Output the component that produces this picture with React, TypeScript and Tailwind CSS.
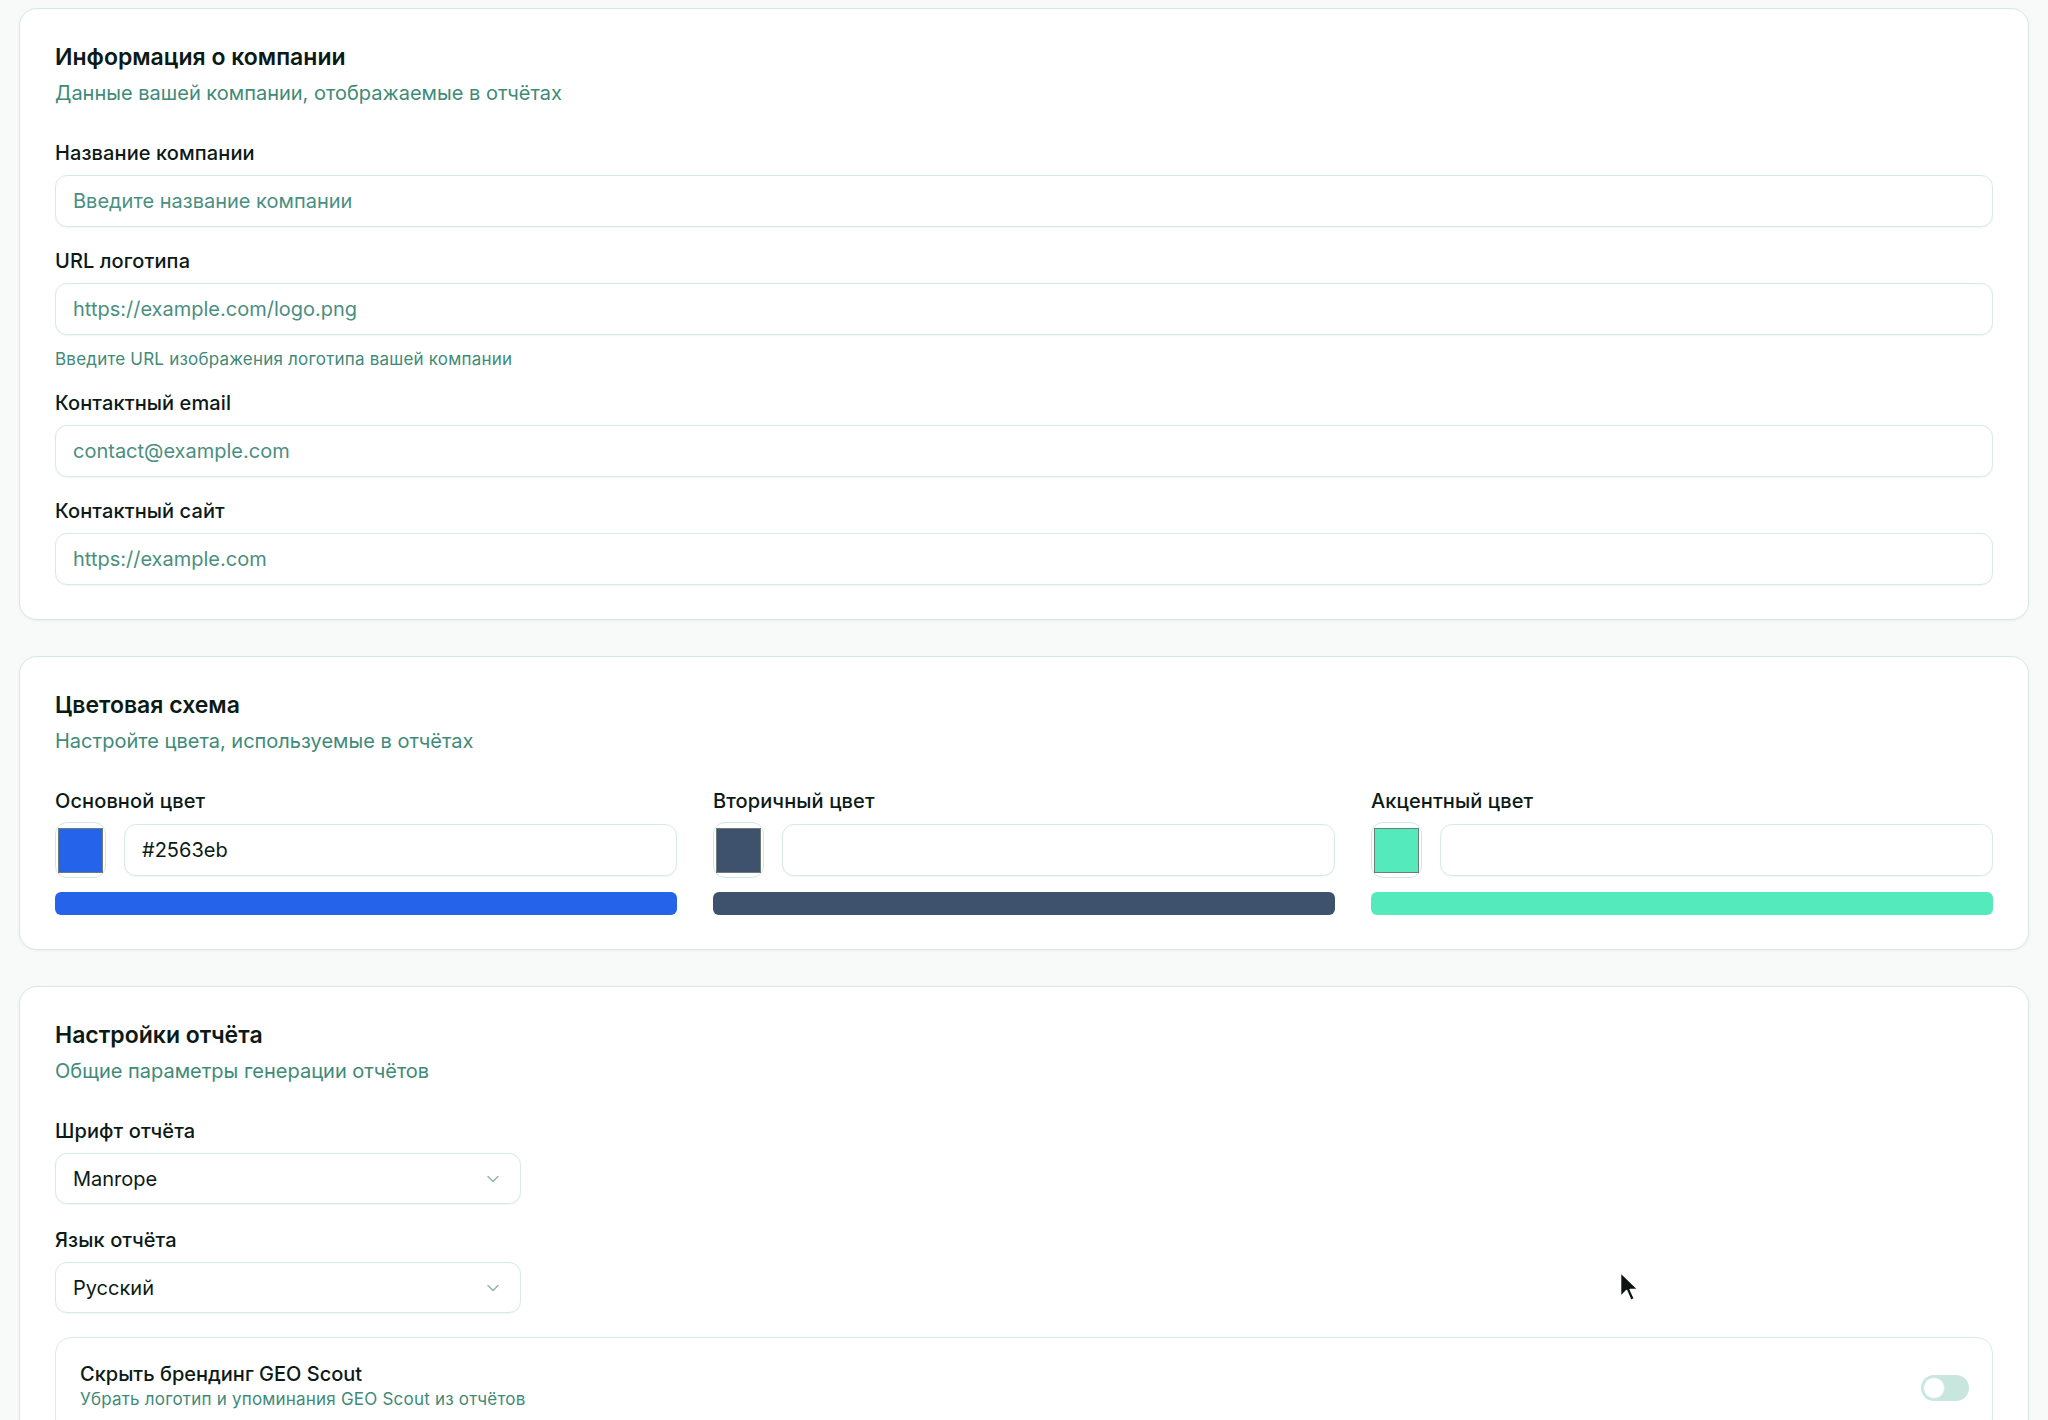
import React from 'react';
import { ChevronDown } from 'lucide-react';

const fields = [
  { label: 'Название компании', placeholder: 'Введите название компании' },
  {
    label: 'URL логотипа',
    placeholder: 'https://example.com/logo.png',
    hint: 'Введите URL изображения логотипа вашей компании',
  },
  { label: 'Контактный email', placeholder: 'contact@example.com' },
  { label: 'Контактный сайт', placeholder: 'https://example.com' },
];

const colors = [
  { label: 'Основной цвет', value: '#2563eb', swatch: 'bg-[#2563eb]' },
  { label: 'Вторичный цвет', value: '', swatch: 'bg-[#3e526e]' },
  { label: 'Акцентный цвет', value: '', swatch: 'bg-[#55eabb]' },
];

const Card: React.FC<{ title: string; subtitle: string; children: React.ReactNode }> = ({
  title,
  subtitle,
  children,
}) => (
  <section className="bg-white border border-[#d4e9e3] rounded-[18px] shadow-[0_1px_3px_rgba(16,80,64,0.05)] px-[35px] pt-[34px] pb-[34px]">
    <h2 className="text-[23px] leading-[28px] font-semibold text-[#0c1a16]">{title}</h2>
    <p className="mt-[9px] text-[20px] leading-[26px] text-[#3f8a78]">{subtitle}</p>
    <div className="mt-[35px]">{children}</div>
  </section>
);

const Label: React.FC<{ children: React.ReactNode }> = ({ children }) => (
  <label className="block text-[20px] leading-[24px] font-medium tracking-[0.005em] text-[#0c1a16]">
    {children}
  </label>
);

const inputCls =
  'w-full h-[52px] rounded-[12px] border border-[#d6ebe5] bg-white px-[17px] text-[20px] text-[#0c1a16] placeholder:text-[#4a8f7f] shadow-[0_1px_2px_rgba(16,80,64,0.06)] outline-none';

const Select: React.FC<{ value: string }> = ({ value }) => (
  <div className="mt-[10px] w-[466px] h-[51px] rounded-[12px] border border-[#d6ebe5] bg-white px-[17px] flex items-center justify-between shadow-[0_1px_2px_rgba(16,80,64,0.06)]">
    <span className="text-[20px] text-[#0c1a16]">{value}</span>
    <ChevronDown className="w-5 h-5 text-[#8db6ac]" strokeWidth={1.75} />
  </div>
);

export default function App() {
  return (
    <div
      className="min-h-screen bg-[#f8f9f9] px-[19px] pt-2 pb-10 flex flex-col gap-9 relative"
      style={{ fontFamily: 'Inter, "Noto Sans", "Liberation Sans", sans-serif' }}
    >
      <Card title="Информация о компании" subtitle="Данные вашей компании, отображаемые в отчётах">
        <div className="flex flex-col gap-[22px]">
          {fields.map((f) => (
            <div key={f.label}>
              <Label>{f.label}</Label>
              <input className={`mt-[10px] ${inputCls}`} placeholder={f.placeholder} />
              {f.hint && (
                <p className="mt-[14px] text-[17px] leading-[20px] tracking-[0.012em] text-[#3f8a78]">{f.hint}</p>
              )}
            </div>
          ))}
        </div>
      </Card>

      <Card title="Цветовая схема" subtitle="Настройте цвета, используемые в отчётах">
        <div className="grid grid-cols-3 gap-9">
          {colors.map((c) => (
            <div key={c.label}>
              <Label>{c.label}</Label>
              <div className="mt-[9px] flex items-center gap-[18px]">
                <div className="w-[51px] h-[56px] shrink-0 rounded-[12px] border border-[#d2e7e1] flex items-center justify-center">
                  <div className={`w-[45px] h-[45px] border border-[#6b7d78] ${c.swatch}`} />
                </div>
                <input className={inputCls} defaultValue={c.value} />
              </div>
              <div className={`mt-[14px] h-[23px] rounded-[6px] ${c.swatch}`} />
            </div>
          ))}
        </div>
      </Card>

      <Card title="Настройки отчёта" subtitle="Общие параметры генерации отчётов">
        <Label>Шрифт отчёта</Label>
        <Select value="Manrope" />
        <div className="mt-[24px]">
          <Label>Язык отчёта</Label>
          <Select value="Русский" />
        </div>
        <div className="mt-6 rounded-[16px] border border-[#d6ebe5] pl-6 pr-[23px] pt-[24px] pb-6 flex items-center justify-between">
          <div>
            <div className="text-[20px] leading-[24px] font-medium text-[#0c1a16]">Скрыть брендинг GEO Scout</div>
            <div className="mt-[2px] text-[17px] leading-[22px] tracking-[0.012em] text-[#3f8a78]">
              Убрать логотип и упоминания GEO Scout из отчётов
            </div>
          </div>
          <div className="mt-1 w-[48px] h-[26px] rounded-full bg-[#c8e6de] p-[2px] flex items-center">
            <div className="w-[22px] h-[22px] rounded-full bg-white border border-[#d6ebe5]" />
          </div>
        </div>
      </Card>

      {/* mouse pointer */}
      <svg className="absolute left-[1618px] top-[1270px]" width="22" height="34" viewBox="0 0 18 28">
        <path
          d="M2 2 L2 22 L7 17 L10.5 25 L13.5 23.7 L10 16 L16.5 16 Z"
          fill="#0b1512"
          stroke="#ffffff"
          strokeWidth="1.3"
          strokeLinejoin="round"
        />
      </svg>
    </div>
  );
}
